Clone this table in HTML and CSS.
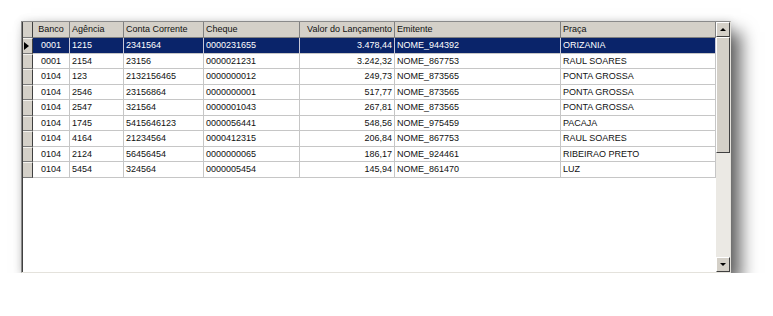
FILE: index.html
```html
<!DOCTYPE html>
<html>
<head>
<meta charset="utf-8">
<link rel="stylesheet" href="styles.css">
</head>
<body>
<div class="frame">
  <div class="grid">
    <div class="row head">
      <div class="ind"></div>
      <div class="c c-banco center">Banco</div>
      <div class="c c-ag">Agência</div>
      <div class="c c-conta">Conta Corrente</div>
      <div class="c c-cheque">Cheque</div>
      <div class="c c-valor right">Valor do Lançamento</div>
      <div class="c c-emit">Emitente</div>
      <div class="c c-praca">Praça</div>
    </div>
    <div class="row sel">
      <div class="ind"><span class="arrow"></span></div>
      <div class="c c-banco center">0001</div>
      <div class="c c-ag">1215</div>
      <div class="c c-conta">2341564</div>
      <div class="c c-cheque">0000231655</div>
      <div class="c c-valor right">3.478,44</div>
      <div class="c c-emit">NOME_944392</div>
      <div class="c c-praca">ORIZANIA</div>
    </div>
    <div class="row">
      <div class="ind"></div>
      <div class="c c-banco center">0001</div>
      <div class="c c-ag">2154</div>
      <div class="c c-conta">23156</div>
      <div class="c c-cheque">0000021231</div>
      <div class="c c-valor right">3.242,32</div>
      <div class="c c-emit">NOME_867753</div>
      <div class="c c-praca">RAUL SOARES</div>
    </div>
    <div class="row">
      <div class="ind"></div>
      <div class="c c-banco center">0104</div>
      <div class="c c-ag">123</div>
      <div class="c c-conta">2132156465</div>
      <div class="c c-cheque">0000000012</div>
      <div class="c c-valor right">249,73</div>
      <div class="c c-emit">NOME_873565</div>
      <div class="c c-praca">PONTA GROSSA</div>
    </div>
    <div class="row">
      <div class="ind"></div>
      <div class="c c-banco center">0104</div>
      <div class="c c-ag">2546</div>
      <div class="c c-conta">23156864</div>
      <div class="c c-cheque">0000000001</div>
      <div class="c c-valor right">517,77</div>
      <div class="c c-emit">NOME_873565</div>
      <div class="c c-praca">PONTA GROSSA</div>
    </div>
    <div class="row">
      <div class="ind"></div>
      <div class="c c-banco center">0104</div>
      <div class="c c-ag">2547</div>
      <div class="c c-conta">321564</div>
      <div class="c c-cheque">0000001043</div>
      <div class="c c-valor right">267,81</div>
      <div class="c c-emit">NOME_873565</div>
      <div class="c c-praca">PONTA GROSSA</div>
    </div>
    <div class="row">
      <div class="ind"></div>
      <div class="c c-banco center">0104</div>
      <div class="c c-ag">1745</div>
      <div class="c c-conta">5415646123</div>
      <div class="c c-cheque">0000056441</div>
      <div class="c c-valor right">548,56</div>
      <div class="c c-emit">NOME_975459</div>
      <div class="c c-praca">PACAJA</div>
    </div>
    <div class="row">
      <div class="ind"></div>
      <div class="c c-banco center">0104</div>
      <div class="c c-ag">4164</div>
      <div class="c c-conta">21234564</div>
      <div class="c c-cheque">0000412315</div>
      <div class="c c-valor right">206,84</div>
      <div class="c c-emit">NOME_867753</div>
      <div class="c c-praca">RAUL SOARES</div>
    </div>
    <div class="row">
      <div class="ind"></div>
      <div class="c c-banco center">0104</div>
      <div class="c c-ag">2124</div>
      <div class="c c-conta">56456454</div>
      <div class="c c-cheque">0000000065</div>
      <div class="c c-valor right">186,17</div>
      <div class="c c-emit">NOME_924461</div>
      <div class="c c-praca">RIBEIRAO PRETO</div>
    </div>
    <div class="row">
      <div class="ind"></div>
      <div class="c c-banco center">0104</div>
      <div class="c c-ag">5454</div>
      <div class="c c-conta">324564</div>
      <div class="c c-cheque">0000005454</div>
      <div class="c c-valor right">145,94</div>
      <div class="c c-emit">NOME_861470</div>
      <div class="c c-praca">LUZ</div>
    </div>
  </div>
  <div class="vscroll">
    <div class="sbtn"><span class="tri-up"></span></div>
    <div class="track"><div class="thumb"></div></div>
    <div class="sbtn"><span class="tri-down"></span></div>
  </div>
</div>
</body>
</html>
```
FILE: styles.css
```css
html, body {
  margin: 0;
  padding: 0;
  background: #ffffff;
}
body {
  font-family: "Liberation Sans", Arial, sans-serif;
  font-size: 9px;
  color: #111;
}
.frame {
  margin: 21px 0 0 21px;
  width: 708px;
  height: 250px;
  display: flex;
  border-left: 1px solid #8a8a8a;
  border-top: 1px solid #8a8a8a;
  border-right: 1px solid #e4e2dc;
  border-bottom: 1px solid #e4e2dc;
  box-shadow: 10px 11px 16px rgba(0, 0, 0, 0.6), 0 0 8px rgba(0, 0, 0, 0.12);
  background: #fff;
}
.grid {
  width: 694px;
  display: flex;
  flex-direction: column;
  border-left: 1px solid #404040;
  background: #fff;
}
.row {
  display: flex;
  height: 15.5px;
  line-height: 14.5px;
}
.row.head {
  height: 16px;
  line-height: 15px;
}
.ind {
  width: 10px;
  box-sizing: border-box;
  background: #d4d0c8;
  border-right: 1px solid #404040;
  border-bottom: 1px solid #7a7a7a;
  border-top: 1px solid #f4f2ee;
  position: relative;
}
.head .ind {
  border-top: none;
}
.c {
  box-sizing: border-box;
  border-right: 1px solid #c6c6c6;
  border-bottom: 1px solid #c6c6c6;
  padding: 0 2px;
  white-space: nowrap;
  overflow: hidden;
}
.head .c {
  background: #d4d0c8;
  border-right: 1px solid #808080;
  border-bottom: 1px solid #808080;
}
.sel .c {
  background: #0a246a;
  color: #fff;
  border-right-color: #c8c8d8;
}
.center { text-align: center; }
.right { text-align: right; }
.c-banco { width: 37px; }
.c-ag { width: 54px; }
.c-conta { width: 80px; }
.c-cheque { width: 96px; }
.c-valor { width: 95px; }
.c-emit { width: 166px; }
.c-praca { width: 155px; }
.arrow {
  position: absolute;
  left: 1px;
  top: 3px;
  width: 0;
  height: 0;
  border-top: 4px solid transparent;
  border-bottom: 4px solid transparent;
  border-left: 5px solid #000;
}
.vscroll {
  width: 14px;
  display: flex;
  flex-direction: column;
  background: #ebe9e4;
}
.sbtn {
  height: 15px;
  box-sizing: border-box;
  background: #d4d0c8;
  border-top: 1px solid #fff;
  border-left: 1px solid #fff;
  border-right: 1px solid #404040;
  border-bottom: 1px solid #404040;
  display: flex;
  align-items: center;
  justify-content: center;
}
.tri-up {
  width: 0;
  height: 0;
  border-left: 3px solid transparent;
  border-right: 3px solid transparent;
  border-bottom: 3px solid #000;
}
.tri-down {
  width: 0;
  height: 0;
  border-left: 3px solid transparent;
  border-right: 3px solid transparent;
  border-top: 3px solid #000;
}
.track {
  flex: 1;
  background: #ebe9e4;
}
.thumb {
  height: 116px;
  box-sizing: border-box;
  background: #d4d0c8;
  border-top: 1px solid #fff;
  border-left: 1px solid #fff;
  border-right: 1px solid #404040;
  border-bottom: 1px solid #404040;
}
```
